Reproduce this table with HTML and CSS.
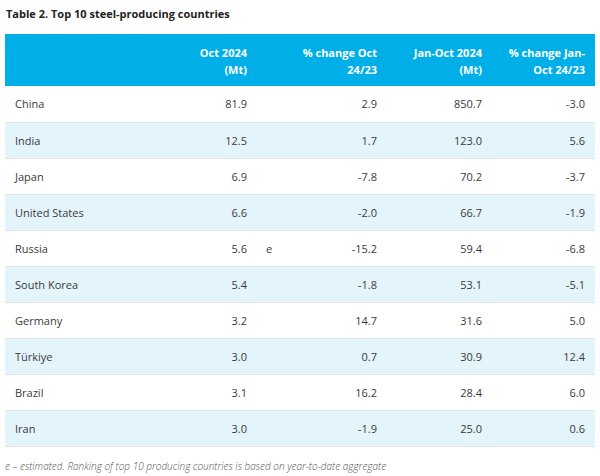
FILE: index.html
```html
<!DOCTYPE html>
<html>
<head>
<meta charset="utf-8">
<link rel="stylesheet" href="styles.css">
</head>
<body>
<div class="wrap">
  <h2 class="title">Table 2. Top 10 steel-producing countries</h2>
  <table class="steel">
    <colgroup>
      <col class="c-country"><col class="c-oct"><col class="c-e"><col class="c-pct"><col class="c-jan"><col class="c-pct2">
    </colgroup>
    <thead>
      <tr>
        <th></th>
        <th class="num">Oct 2024<br>(Mt)</th>
        <th></th>
        <th class="num">% change Oct<br>24/23</th>
        <th class="num">Jan-Oct 2024<br>(Mt)</th>
        <th class="num">% change Jan-<br>Oct 24/23</th>
      </tr>
    </thead>
    <tbody>
      <tr><td>China</td><td class="num">81.9</td><td></td><td class="num">2.9</td><td class="num">850.7</td><td class="num">-3.0</td></tr>
      <tr><td>India</td><td class="num">12.5</td><td></td><td class="num">1.7</td><td class="num">123.0</td><td class="num">5.6</td></tr>
      <tr><td>Japan</td><td class="num">6.9</td><td></td><td class="num">-7.8</td><td class="num">70.2</td><td class="num">-3.7</td></tr>
      <tr><td>United States</td><td class="num">6.6</td><td></td><td class="num">-2.0</td><td class="num">66.7</td><td class="num">-1.9</td></tr>
      <tr><td>Russia</td><td class="num">5.6</td><td class="flag">e</td><td class="num">-15.2</td><td class="num">59.4</td><td class="num">-6.8</td></tr>
      <tr><td>South Korea</td><td class="num">5.4</td><td></td><td class="num">-1.8</td><td class="num">53.1</td><td class="num">-5.1</td></tr>
      <tr><td>Germany</td><td class="num">3.2</td><td></td><td class="num">14.7</td><td class="num">31.6</td><td class="num">5.0</td></tr>
      <tr><td>Türkiye</td><td class="num">3.0</td><td></td><td class="num">0.7</td><td class="num">30.9</td><td class="num">12.4</td></tr>
      <tr><td>Brazil</td><td class="num">3.1</td><td></td><td class="num">16.2</td><td class="num">28.4</td><td class="num">6.0</td></tr>
      <tr><td>Iran</td><td class="num">3.0</td><td></td><td class="num">-1.9</td><td class="num">25.0</td><td class="num">0.6</td></tr>
    </tbody>
  </table>
  <p class="note">e – estimated. Ranking of top 10 producing countries is based on year-to-date aggregate</p>
</div>
</body>
</html>
```

FILE: styles.css
```css
* { box-sizing: border-box; }
html, body { margin: 0; padding: 0; background: #fff; }
body {
  font-family: "Open Sans", "Liberation Sans", sans-serif;
  color: #3a3a3a;
}
.wrap { padding: 5px 5px 0 5px; }
.title {
  margin: 0;
  padding-left: 1px;
  font-size: 11px;
  line-height: 17px;
  font-weight: 700;
  color: #222;
}
.steel {
  margin-top: 12px;
  width: 590px;
  border-collapse: collapse;
  table-layout: fixed;
  font-size: 11px;
}
.c-country { width: 145px; }
.c-oct { width: 107px; }
.c-e { width: 33px; }
.c-pct { width: 97px; }
.c-jan { width: 105px; }
.c-pct2 { width: 103px; }
.steel thead th {
  background: #00aee8;
  color: #fff;
  font-weight: 700;
  font-size: 11px;
  line-height: 17px;
  height: 52px;
  padding: 1px 10px 0 10px;
  vertical-align: middle;
  white-space: nowrap;
}
.steel td {
  height: 36px;
  padding: 0 10px;
  line-height: 17px;
  border-bottom: 1px solid #e2e6e8;
  vertical-align: middle;
}
.steel tbody tr:nth-child(even) td { background: #e3f4fb; }
.steel .num { text-align: right; }
.steel .flag { padding-left: 9px; }
.note {
  margin: 11px 0 0 0;
  font-size: 10px;
  line-height: 17px;
  font-style: italic;
  font-weight: 300;
  color: #555;
}
```
